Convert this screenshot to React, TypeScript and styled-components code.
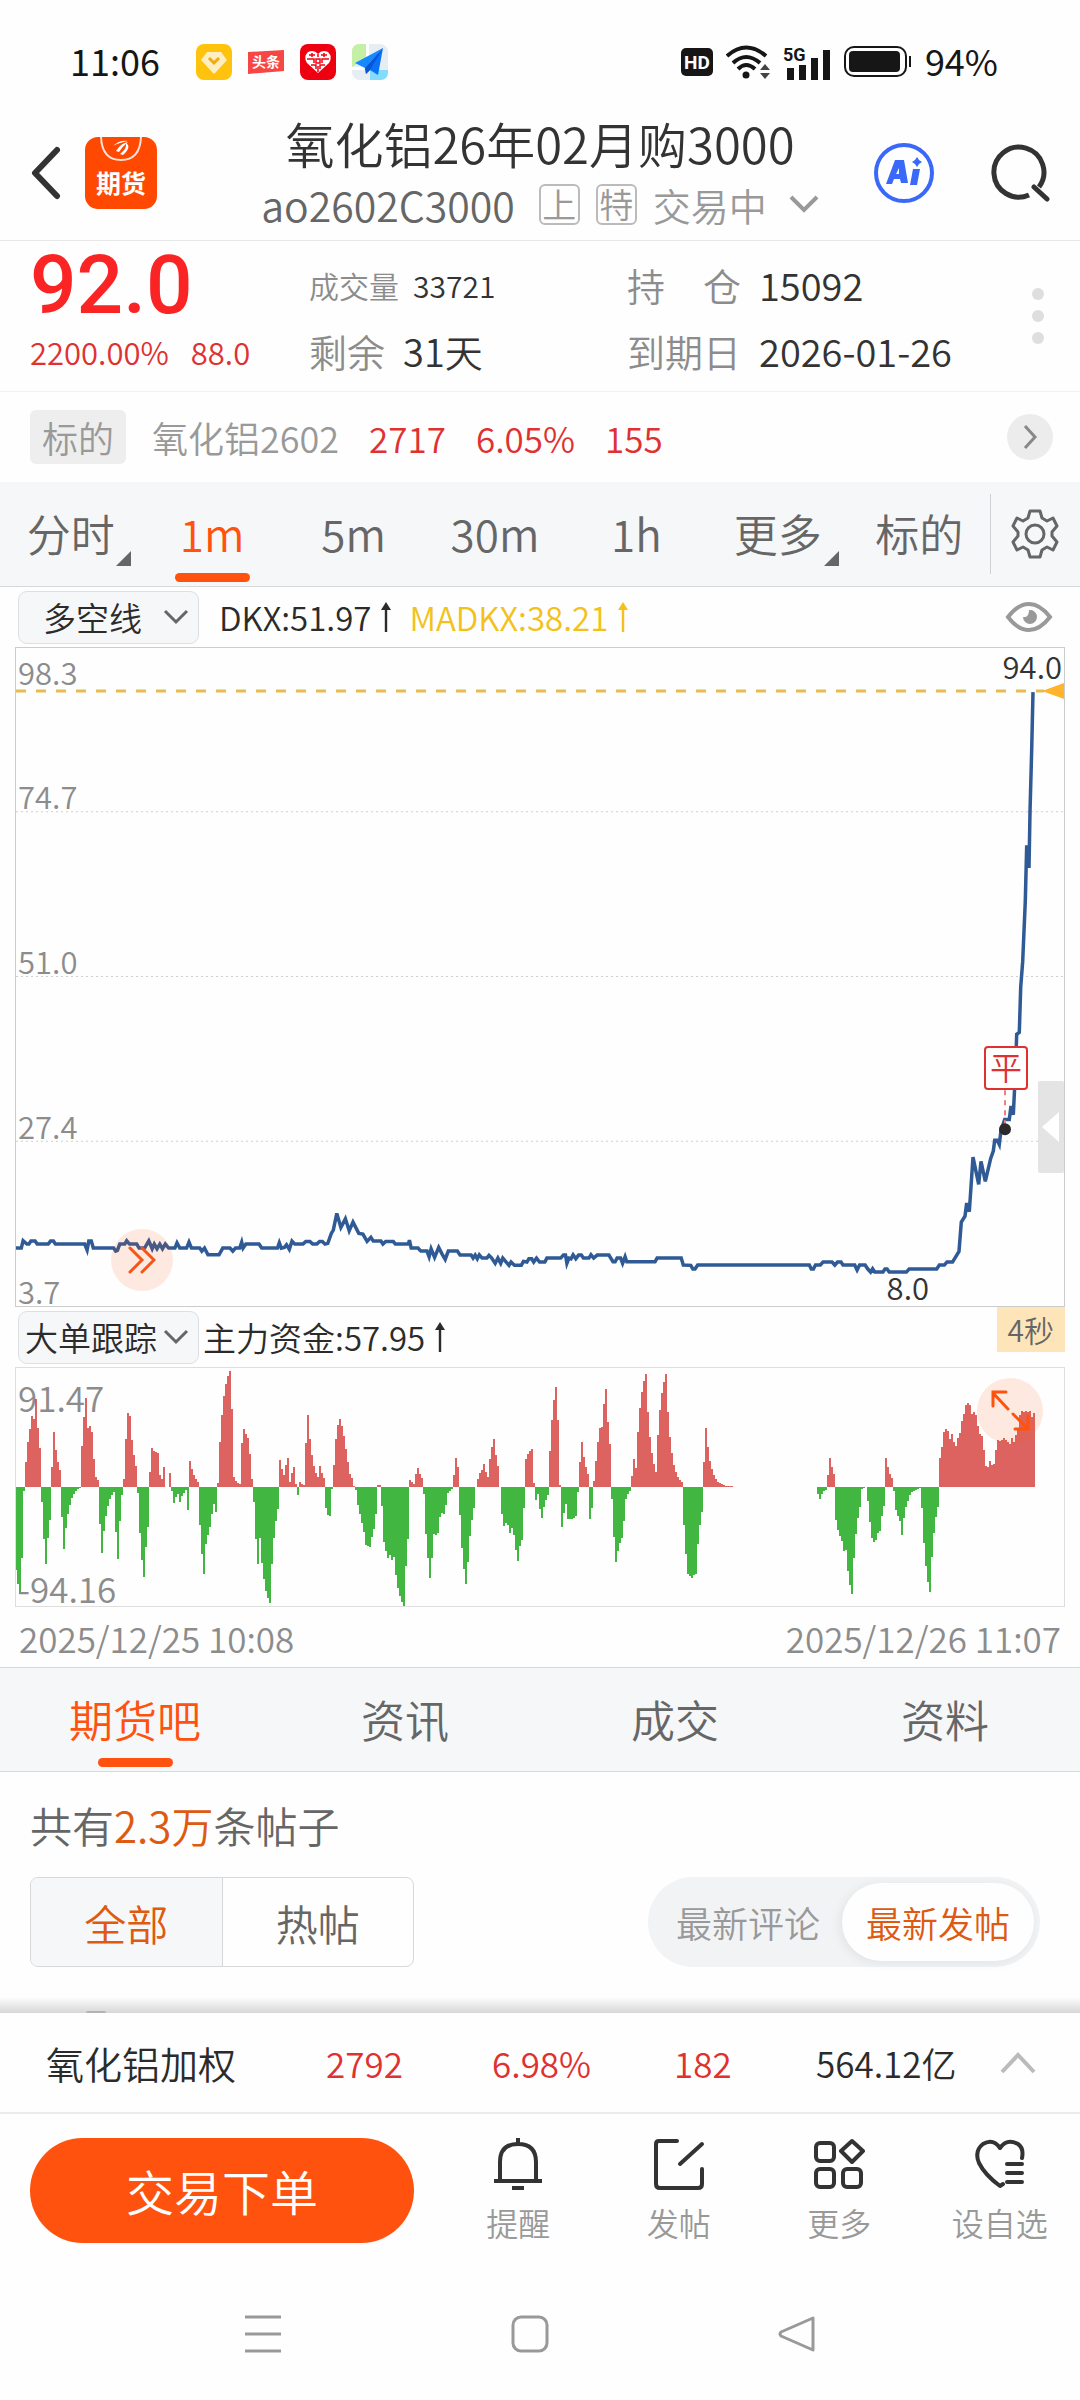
import React, { useState } from "react";
import styled, { createGlobalStyle } from "styled-components";

const color = {
  ink: "#2b2b2b",
  text: "#333333",
  mid: "#666666",
  soft: "#8c8c8c",
  faint: "#999999",
  red: "#e03131",
  brand: "#ff520e",
  accent: "#dd5a10",
  panel: "#f6f7f9",
  rule: "#d6d8db",
  frame: "#cccccc",
  line: "#2f5a96",
  gold: "#f2c21b",
};

const GlobalStyle = createGlobalStyle`
  *, *::before, *::after { box-sizing: border-box; }
  body {
    margin: 0;
    background: #fefefe;
    color: ${color.text};
    font-family: "Noto Sans CJK SC", "Noto Sans", sans-serif;
    font-weight: 350;
  }
  button, select {
    margin: 0;
    padding: 0;
    border: 0;
    background: none;
    color: inherit;
    font: inherit;
    cursor: pointer;
  }
  svg { display: block; flex: none; }
`;

/* ---------- chart data ---------- */

type Trace = { x: number; y: number; sx: number; sy: number; pts: number[] };

const priceTraces: Trace[] = [
  {
    x: -16, y: 533, sx: 2.904, sy: 3,
    pts: [
      45,204,62,204,67,182,78,192,84,192,90,183,102,183,108,192,140,192,147,183,155,183,161,192,246,192,253,210,
      258,183,265,183,271,204,330,204,336,213,341,211,348,192,362,192,368,182,376,192,397,192,404,204,420,204,
      432,182,442,206,448,192,456,206,464,192,472,206,480,192,490,204,508,204,514,188,522,204,542,204,549,186,
      556,204,580,204,586,213,594,204,604,224,636,224,647,204,668,204,676,213,684,204,696,204,702,186,706,204,
      714,192,752,192,760,204,806,204,811,188,817,204,826,202,832,194,840,208,848,183,856,192,880,192,888,184,
      900,184,908,192,920,192,928,184,936,184,944,192,952,190,962,160,968,150,978,100,990,142,1003,116,1014,152,
      1025,126,1042,160,1054,162,1066,184,1077,172,1084,183,1106,183,1112,192,1120,184,1142,184,1148,192,
      1186,192,1189,180,1194,204,1214,204,1222,213,1240,213,1246,230,1252,206,1262,232,1274,202,1284,222,
      1293,238,1302,213,1328,213,1336,225,1368,225,1374,234,1380,225,1386,236,1392,224,1400,234,1414,234,
      1420,226,1428,234,1438,250,1446,234,1454,250,1460,234,1470,246,1478,256,1484,246,1494,256,1514,256,
      1520,244,1530,246,1536,236,1544,236,1550,246,1558,234,1567,246,
    ],
  },
  {
    x: 524, y: 533, sx: 2.904, sy: 3,
    pts: [
      0,246,14,246,20,234,60,234,68,225,74,225,78,250,84,234,90,236,96,224,104,236,112,225,120,225,126,234,
      142,234,148,224,156,234,166,225,200,225,212,245,218,245,224,234,234,234,240,250,247,230,252,245,334,245,
      340,234,410,234,416,255,438,256,444,267,450,267,458,255,782,255,788,267,794,267,800,255,814,255,822,246,
      848,246,856,255,864,246,874,246,880,255,914,255,921,270,928,255,944,255,952,267,960,276,966,266,972,276,
      996,276,1002,267,1008,267,1014,276,1064,276,1072,267,1152,267,1160,255,1174,255,1182,246,1198,246,
    ],
  },
  {
    x: 784, y: -7, sx: 3, sy: 2.306,
    pts: [
      477,1410,484,1342,495,1328,500,1298,508,1318,514,1250,519,1192,536,1255,543,1202,556,1248,572,1195,
      580,1178,584,1153,592,1153,598,1163,603,1130,614,1105,628,1105,633,1074,640,1094,646,1000,650,908,
      658,904,662,800,668,740,676,600,680,472,687,524,690,395,695,250,699,118,
    ],
  },
];

const pricePoints = priceTraces
  .flatMap((t) => {
    const out: string[] = [];
    for (let i = 0; i < t.pts.length; i += 2) {
      out.push(`${(t.x + t.pts[i] / t.sx).toFixed(1)},${(t.y + t.pts[i + 1] / t.sy).toFixed(1)}`);
    }
    return out;
  })
  .join(" ");

/* Fund-flow runs: first the start of the run, then one reading per minute; 411 is the zero level. */
const flowZero = 411;
const flowScale = 2.904;
const flowRuns: [number, number[][]][] = [
  [-16, [
    [45,663,705,735,627,426],
    [73,336,276,237,198,207,147,234,294],
    [119,459,570,645,567,513],
    [148,351,246,300,336,360],
    [177,504,600,537,495,468,447,435,425,419,415],
    [235,288,201,144,234,228,246,327,381,390],
    [287,525,612,546,501,471,450,438,429,549,630,516,438],
    [357,387,267,189,198,270,315,348],
    [398,432,552,633,684,594,534],
    [433,366,294,303,306,309,375,387,351,413,413,369,426,462,444,435,459,441,432,423,483],
    [549,333,357,375,387,396],
    [578,528,615,675,585,558,534,495,465,489],
    [630,399,276,195,138,102,78,63,177,381,393,399,402],
    [700,279,237,252,264,312,387],
    [735,459,570,645,567,642,690,726,747,762,645,567,516,480],
    [810,330,357,375,345,324,396,369,351,402,438,396,402,405],
    [886,279,195,267,315,348,369,381,348,369,384],
    [944,477,498,501,420],
    [967,345,267,225,207,228,258,297,336,372,384,408],
    [1031,423,468,495,522,549,588,591,594,564,540,495],
    [1095,405,405],
    [1107,471,579,606,627,618,633,624,678,717,741,759,771,651,570],
    [1188,390,396,402,372,354,372,384],
    [1228,435,555,627,687,627,555,558,552,504,492,495,468,432,426,420],
    [1315,375,324,351],
    [1333,498,597,660,705,639,561,513,477,414],
    [1385,387,369,360,342,366,381,327,291,267,315,348],
    [1455,495,531,522,528,552,537,558,603,636,591,573,477],
    [1524,327,312,303,297,399,453,435,480],
  ]],
  [524, [
    [3,507,474,453,438],
    [26,303,210,150,111,210,405],
    [61,534,492,465,510,510,510,507,501,429],
    [113,336,276,321,351,372],
    [142,510,477],
    [154,393,333,276,234,231,162,117,216,282],
    [206,450,564,639,606,582,567,516,450,435,426],
    [264,378,327,354,246,174,126,93,72,186,261,309,342,366,255,180,129,96,72,186,261,309,345,366,381,390,396],
    [415,528,615,675,681,687,678,675,585,528,489],
    [473,336,234,291,333,357,375,387,396,399,402,405,408,408,408,408],
    [804,435,450,435,426,423],
    [833,375,324,351,372],
    [857,513,543,561,576,606,603,666,708,735,627,555,507,474,420,417,414],
    [950,456,519,567,579,573,552,546,501,471],
    [1002,324,351,372,384],
    [1025,426,483,501,516,558,507,474,456,438,429,425,421,418,415],
    [1106,477,582,651,699,729,624,552,504,474],
    [1159,324,291,246,237,243,267,252,276,288,264,249,213,192,165,159,165,192,186,195,228,252,258,300,348,351,333,345,342,300,270,273,270,264,270,276,282,264,276,255,237,195,183,186,183,186,183,201,189],
  ]],
];

const flowBars = flowRuns.flatMap(([base, runs]) =>
  runs.flatMap(([start, ...values]) =>
    values.map((v, i) => ({
      x: Math.round(base + start / flowScale) + i * 2,
      h: (flowZero - v) / 3,
    }))
  )
);

/* ---------- layout ---------- */

const Page = styled.main`
  display: flex;
  flex-direction: column;
  min-height: 100vh;
  background: #fefefe;
`;

const StatusBar = styled.div`
  display: flex;
  justify-content: space-between;
  height: 110px;
  padding: 14px 82px 0 70px;
  color: #161616;
  font-size: 36px;
  line-height: 40px;
  font-weight: 400;
`;

const StatusGroup = styled.div<{ $gap: number }>`
  display: flex;
  align-items: center;
  gap: ${(p) => p.$gap}px;
`;

const StatusText = styled.span<{ $after?: number }>`
  margin-right: ${(p) => p.$after || 0}px;
  padding-bottom: 4px;
`;

const Header = styled.header`
  display: grid;
  grid-template-columns: 200px 1fr 200px;
  align-items: center;
  padding: 2px 0 6px;
  border-bottom: 1px solid #e8e8e8;
`;

const HeaderSide = styled.div<{ $end?: boolean }>`
  display: flex;
  align-items: center;
  justify-content: ${(p) => (p.$end ? "flex-end" : "flex-start")};
  gap: ${(p) => (p.$end ? 56 : 24)}px;
  padding: ${(p) => (p.$end ? "0 30px 0 0" : "0 0 0 29px")};
`;

const HeaderTitle = styled.div`
  text-align: center;
  white-space: nowrap;
`;

const Title = styled.h1`
  margin: 0;
  font-size: 49px;
  font-weight: 350;
  line-height: 62px;
`;

const Subtitle = styled.div`
  display: flex;
  align-items: center;
  justify-content: center;
  gap: 16px;
  height: 60px;
  color: ${color.faint};
  font-size: 38px;
`;

const Code = styled.span`
  margin-right: 8px;
  color: ${color.mid};
  font-size: 41px;
`;

const Tag = styled.span`
  display: grid;
  place-items: center;
  width: 41px;
  height: 41px;
  border: 2px solid #bbbbbb;
  border-radius: 6px;
  font-size: 34px;
  line-height: 34px;
`;

const StateButton = styled.button`
  display: flex;
  align-items: center;
  gap: 22px;
`;

const IconButton = styled.button`
  display: grid;
  place-items: center;
`;

const Quote = styled.section`
  display: grid;
  grid-template-columns: 279px 318px 1fr 84px;
  grid-template-rows: 88px 44px;
  align-items: center;
  padding: 0 0 18px 30px;
  border-bottom: 1px solid #f1f1f1;
  white-space: nowrap;
`;

const LastPrice = styled.strong`
  color: #fa2424;
  font-family: Roboto, sans-serif;
  font-size: 82px;
  font-weight: 500;
  line-height: 88px;
`;

const Change = styled.div`
  display: flex;
  gap: 22px;
  color: ${color.red};
  font-size: 31px;
`;

const Stat = styled.div<{ $small?: boolean }>`
  display: flex;
  align-items: center;
  gap: ${(p) => (p.$small ? 14 : 18)}px;
  color: ${color.soft};
  font-size: ${(p) => (p.$small ? 30 : 38)}px;
  line-height: 44px;
`;

const StatLabel = styled.span<{ $spread?: boolean }>`
  display: ${(p) => (p.$spread ? "flex" : "block")};
  justify-content: space-between;
  min-width: ${(p) => (p.$spread ? "114px" : "0")};
`;

const StatValue = styled.span`
  color: ${color.text};
`;

const MoreDots = styled.button`
  display: grid;
  gap: 10px;
  justify-content: center;
  grid-column: 4;
  grid-row: 1 / 3;
  padding-top: 18px;
  i {
    width: 12px;
    height: 12px;
    border-radius: 50%;
    background: #dedede;
  }
`;

const Underlying = styled.section`
  display: flex;
  align-items: center;
  height: 90px;
  padding: 0 27px 0 30px;
  color: ${color.faint};
  font-size: 36px;
  white-space: nowrap;
`;

const UnderlyingBadge = styled.span`
  margin-right: 26px;
  padding: 0 12px;
  border-radius: 6px;
  background: #eeeeee;
  line-height: 54px;
`;

const Rise = styled.span`
  margin-left: 30px;
  color: ${color.red};
  font-size: 35px;
`;

const GoButton = styled.button`
  display: grid;
  place-items: center;
  width: 46px;
  height: 46px;
  margin-left: auto;
  border-radius: 50%;
  background: #ececec;
`;

const TabBar = styled.nav<{ $top?: boolean }>`
  display: flex;
  height: 105px;
  border-top: ${(p) => (p.$top ? `1px solid ${color.rule}` : "0")};
  border-bottom: 1px solid ${color.rule};
  background: ${color.panel};
`;

const Tab = styled.button<{ $on: boolean }>`
  position: relative;
  flex: 1 1 0;
  padding-bottom: 2px;
  color: ${(p) => (p.$on ? color.brand : color.mid)};
  font-size: 44px;
  line-height: 64px;
  &::after {
    content: "";
    display: ${(p) => (p.$on ? "block" : "none")};
    position: absolute;
    left: 50%;
    bottom: 4px;
    width: 75px;
    height: 9px;
    margin-left: -37px;
    border-radius: 5px;
    background: ${color.brand};
  }
`;

const Corner = styled.svg`
  position: absolute;
  right: 10px;
  bottom: 20px;
`;

const SettingsButton = styled(IconButton)`
  width: 90px;
  margin: 12px 0;
  border-left: 1px solid #cfd1d4;
`;

const IndicatorRow = styled.div`
  display: flex;
  align-items: center;
  height: 60px;
  padding: 0 27px 0 18px;
  color: ${color.ink};
  font-size: 33px;
  white-space: nowrap;
`;

const SelectBox = styled.label<{ $gap: number }>`
  display: grid;
  align-items: center;
  width: 181px;
  height: 53px;
  margin-right: ${(p) => p.$gap}px;
  border: 1px solid #dddfe3;
  border-radius: 9px;
  background: ${color.panel};
  > * { grid-area: 1 / 1; }
  > svg { justify-self: end; margin-right: 9px; pointer-events: none; }
`;

const Select = styled.select<{ $inset: number }>`
  appearance: none;
  width: 100%;
  height: 51px;
  padding-left: ${(p) => p.$inset}px;
`;

const Reading = styled.span<{ $tone?: string }>`
  display: flex;
  align-items: center;
  gap: 8px;
  margin-right: 16px;
  color: ${(p) => p.$tone || color.ink};
`;

const EyeButton = styled(IconButton)`
  margin-left: auto;
`;

const PlotFrame = styled.div<{ $height: number; $tone: string }>`
  position: relative;
  height: ${(p) => p.$height}px;
  margin: 0 15px;
  border: 1px solid ${(p) => p.$tone};
`;

const Plot = styled.svg`
  width: 100%;
  height: 100%;
`;

const AxisLabel = styled.span<{ $top: number; $size?: number }>`
  position: absolute;
  left: 2px;
  top: ${(p) => p.$top}px;
  color: ${color.soft};
  font-size: ${(p) => p.$size || 31}px;
  line-height: 40px;
`;

const HighLabel = styled.span`
  position: absolute;
  right: 2px;
  top: -2px;
  font-size: 31px;
  line-height: 40px;
`;

const LowLabel = styled.span`
  position: absolute;
  right: 135px;
  bottom: -1px;
  font-size: 31px;
  line-height: 40px;
`;

const TradeMark = styled.span`
  position: absolute;
  right: 36px;
  top: 398px;
  display: grid;
  place-items: center;
  width: 44px;
  height: 44px;
  padding-bottom: 4px;
  border: 2px solid ${color.red};
  border-radius: 4px;
  background: #fefefe;
  color: ${color.red};
  font-size: 32px;
  line-height: 32px;
`;

const DrawerHandle = styled.button`
  position: absolute;
  right: 0;
  top: 433px;
  display: grid;
  place-items: center end;
  width: 26px;
  height: 92px;
  border-radius: 2px;
  background: #e4e4e4;
`;

const FloatButton = styled.button<{ $size: number; $place: string }>`
  position: absolute;
  inset: ${(p) => p.$place};
  display: grid;
  place-items: center;
  width: ${(p) => p.$size}px;
  height: ${(p) => p.$size}px;
  border-radius: 50%;
  background: rgba(255, 82, 14, 0.12);
`;

const Countdown = styled.span`
  align-self: flex-start;
  margin: 0 -12px 0 auto;
  padding: 0 11px;
  background: #fde5b9;
  color: ${color.mid};
  font-size: 30px;
  line-height: 45px;
`;

const DateRow = styled.div`
  display: flex;
  align-items: center;
  justify-content: space-between;
  height: 60px;
  padding: 0 19px;
  color: ${color.soft};
  font-size: 35px;
`;

const Posts = styled.section`
  padding: 29px 40px 0 30px;
`;

const PostCount = styled.p`
  margin: 0 0 28px;
  color: ${color.mid};
  font-size: 42px;
  line-height: 48px;
`;

const Accent = styled.span`
  color: ${color.accent};
`;

const FilterRow = styled.div`
  display: flex;
  justify-content: space-between;
`;

const Segment = styled.div`
  display: flex;
  width: 384px;
  height: 90px;
  overflow: hidden;
  border: 1px solid #d8d8d8;
  border-radius: 8px;
`;

const SegmentButton = styled.button<{ $on: boolean }>`
  flex: 1;
  background: ${(p) => (p.$on ? color.panel : "transparent")};
  color: ${(p) => (p.$on ? color.accent : color.mid)};
  font-size: 42px;
  & + & { border-left: 1px solid #d8d8d8; }
`;

const Pill = styled.div`
  display: flex;
  height: 90px;
  padding: 6px;
  border-radius: 45px;
  background: #f2f3f5;
`;

const PillButton = styled.button<{ $on: boolean }>`
  padding: 0 ${(p) => (p.$on ? 24 : 22)}px;
  border-radius: 39px;
  background: ${(p) => (p.$on ? "#fefefe" : "transparent")};
  box-shadow: ${(p) => (p.$on ? "-2px 2px 12px rgba(0, 0, 0, 0.07)" : "none")};
  color: ${(p) => (p.$on ? color.accent : color.faint)};
  font-size: 36px;
`;

const FeedEdge = styled.div`
  display: flex;
  align-items: flex-end;
  height: 46px;
  overflow: hidden;
  background: linear-gradient(to top, #d6d6d6, rgba(254, 254, 254, 0) 16px);
`;

const AvatarTip = styled.span`
  width: 20px;
  height: 2px;
  margin-left: 86px;
  border-radius: 10px 10px 0 0;
  background: #b4b4b4;
`;

const IndexRow = styled.section`
  display: grid;
  grid-template-columns: 280px 166px 182px 142px 1fr auto;
  align-items: center;
  height: 101px;
  padding: 0 44px 0 46px;
  border-bottom: 2px solid #ececec;
  color: ${color.red};
  font-size: 35px;
  white-space: nowrap;
`;

const IndexName = styled.span`
  color: ${color.ink};
  font-size: 38px;
`;

const IndexVolume = styled.span`
  color: ${color.ink};
`;

const ActionBar = styled.footer`
  display: flex;
  gap: 24px;
  padding: 24px 0 0 30px;
`;

const TradeButton = styled.button`
  width: 384px;
  height: 105px;
  padding-bottom: 2px;
  border-radius: 53px;
  background: ${color.brand};
  color: #ffffff;
  font-size: 48px;
`;

const Actions = styled.div`
  display: flex;
  flex: 1;
`;

const Action = styled.button`
  display: flex;
  flex: 1 1 0;
  flex-direction: column;
  align-items: center;
  gap: 10px;
  color: ${color.faint};
  font-size: 32px;
  line-height: 44px;
  white-space: nowrap;
`;

const SystemNav = styled.nav`
  display: grid;
  grid-template-columns: repeat(3, 1fr);
  flex: 1;
  align-content: center;
  padding: 24px 150px 0 130px;
`;

/* ---------- icons ---------- */

const Chevron = ({ w, h, stroke, width = 3, up = false }: { w: number; h: number; stroke: string; width?: number; up?: boolean }) => (
  <svg width={w} height={h} fill="none" stroke={stroke} strokeWidth={width} aria-hidden="true">
    <path d={up ? `M2 ${h - 2}L${w / 2} 3L${w - 2} ${h - 2}` : `M2 2L${w / 2} ${h - 3}L${w - 2} 2`} />
  </svg>
);

const ArrowUp = () => (
  <svg width="14" height="30" viewBox="0 0 14 30" aria-hidden="true">
    <path d="M7 6V30" stroke="currentColor" strokeWidth="2.4" />
    <path d="M7 0L12 8H2Z" fill="currentColor" />
  </svg>
);

const GemIcon = () => (
  <svg width="36" height="36" viewBox="0 0 36 36" aria-hidden="true">
    <rect width="36" height="36" rx="8" fill="#ffc30d" />
    <path d="M11 8H25L31 16L19 29Q18 30 17 29L5 16Z" fill="#ffeec2" />
    <path d="M13 14L18 19L23 14" fill="none" stroke="#f2a90c" strokeWidth="3" />
  </svg>
);

const NewsIcon = () => (
  <svg width="36" height="36" viewBox="0 0 36 36" aria-hidden="true">
    <path d="M0 8L36 6V27L0 30Z" fill="#f64744" />
    <text x="18" y="23" textAnchor="middle" fontSize="14" fontWeight="700" fill="#fff">头条</text>
  </svg>
);

const HeartIcon = () => (
  <svg width="36" height="36" viewBox="0 0 36 36" aria-hidden="true">
    <rect width="36" height="36" rx="8" fill="#ee0010" />
    <path d="M18 29L7 19Q3 13 8 8Q14 5 18 10Q22 5 28 8Q33 13 29 19Z" fill="#fff" />
    <path d="M9 11h6M21 11h6M7 15h7v4M29 15h-7v4M11 21h5v4M25 21h-5v4M18 10v3M12 9v4M24 9v4M18 22v6M16 15h4v4h-4z" fill="none" stroke="#ee0010" strokeWidth="1.5" />
  </svg>
);

const MapIcon = () => (
  <svg width="36" height="36" viewBox="0 0 36 36" aria-hidden="true">
    <rect width="36" height="36" rx="8" fill="#e6edf3" />
    <path d="M8 0H14V14L0 23V8Q0 0 8 0Z" fill="#c3f0a5" />
    <path d="M18 26H36V28Q36 36 28 36H18Z" fill="#84dcfc" />
    <path d="M14 0h3v14h-3zM0 23h12v3H0z" fill="#fff" />
    <path d="M31 4L3 19L13 24Z" fill="#1789ff" />
    <path d="M31 4L13 24L14 30L18 26L26 31Z" fill="#0a72f5" />
    <path d="M31 4L13 24L14 30L18 26Z" fill="#0756d8" />
  </svg>
);

const HdIcon = () => (
  <svg width="32" height="28" viewBox="0 0 32 28" aria-hidden="true">
    <rect width="32" height="28" rx="5" fill="#161616" />
    <text x="16" y="21" textAnchor="middle" fontFamily="Roboto" fontSize="19" fontWeight="700" fill="#fff">HD</text>
  </svg>
);

const WifiIcon = () => (
  <svg width="44" height="34" viewBox="0 0 44 34" aria-hidden="true">
    <g fill="none" stroke="#161616" strokeWidth="4">
      <path d="M1 11Q20 -6 40 11" />
      <path d="M7 18Q20 6 34 18" />
      <path d="M12 24Q20 16 29 24" />
    </g>
    <circle cx="20" cy="30" r="3.5" fill="#161616" />
    <path d="M39 19L44 25H34ZM39 34L44 28H34Z" fill="#444" />
  </svg>
);

const SignalIcon = () => (
  <svg width="48" height="38" viewBox="0 -4 48 38" aria-hidden="true">
    <text x="0" y="14" fontFamily="Roboto" fontSize="18" fontWeight="700" fill="#161616">5G</text>
    <path d="M4 21h7v12H4zM16 18h7v15h-7zM28 11h7v22h-7zM40 3h7v30h-7z" fill="#161616" />
  </svg>
);

const BatteryIcon = () => (
  <svg width="68" height="32" viewBox="0 0 68 32" aria-hidden="true">
    <rect x="1" y="1" width="61" height="29" rx="9" fill="none" stroke="#161616" strokeWidth="2" />
    <rect x="5" y="5" width="51" height="21" rx="4" fill="#161616" />
    <path d="M66 10V21" stroke="#161616" strokeWidth="2" />
  </svg>
);

const BackIcon = () => (
  <svg width="32" height="54" viewBox="0 0 32 54" fill="none" stroke="#333" strokeWidth="6" strokeLinecap="round" aria-hidden="true">
    <path d="M28 4L6 27L28 50" strokeLinejoin="round" />
  </svg>
);

const AppLogo = () => (
  <svg width="72" height="72" viewBox="0 0 72 72" aria-hidden="true">
    <rect width="72" height="72" rx="13" fill="#ff4800" />
    <path d="M16 0Q17 23 36 23Q55 23 56 0" fill="none" stroke="#ffe1d6" strokeWidth="2" />
    <path d="M28 9Q34 3 43 4Q33 6 28 9ZM31 14Q36 6 43 5Q37 10 34 15ZM35 17Q42 12 41 6Q47 10 38 18Z" fill="#fff" />
    <text x="36" y="56" textAnchor="middle" fontSize="25" fontWeight="700" fill="#fff">期货</text>
  </svg>
);

const AiIcon = () => (
  <svg width="60" height="60" viewBox="0 0 60 60" aria-hidden="true">
    <circle cx="30" cy="30" r="28" fill="none" stroke="#3a68f8" strokeWidth="4" />
    <path d="M12 41L21 17H30L34 40H27L26 36H20L18 41ZM22 31H25V25ZM39 26H46L43 42H36ZM43 14L45 17L48 19L45 21L43 24L41 21L38 19L41 17Z" fill="#3a68f8" />
  </svg>
);

const SearchIcon = () => (
  <svg width="60" height="60" viewBox="0 0 60 60" fill="none" stroke="#333" strokeWidth="5" strokeLinecap="round" aria-hidden="true">
    <path d="M39 52A25 25 0 1 1 49 44" strokeLinecap="butt" />
    <path d="M44 44L57 56" />
  </svg>
);

const GearIcon = () => (
  <svg width="48" height="52" viewBox="0 0 48 52" fill="none" stroke="#666" strokeWidth="3" strokeLinejoin="round" aria-hidden="true">
    <path d="M19 3H29L31 10L36 13L42 10L46 18L41 24V28L46 34L42 42L36 39L31 42L29 49H19L17 42L12 39L6 42L2 34L7 28V24L2 18L6 10L12 13L17 10Z" />
    <circle cx="24" cy="26" r="9" />
  </svg>
);

const EyeIcon = () => (
  <svg width="48" height="32" viewBox="0 0 48 32" aria-hidden="true">
    <path d="M3 16Q13 3 24 3Q35 3 45 16Q35 29 24 29Q13 29 3 16Z" fill="none" stroke="#999" strokeWidth="4" />
    <path d="M24 9A7 7 0 1 1 18 16Q24 17 24 9Z" fill="#999" />
  </svg>
);

const BellIcon = () => (
  <svg width="52" height="52" viewBox="0 0 52 52" fill="none" stroke="#333" strokeWidth="4" aria-hidden="true">
    <path d="M26 0V6M8 43V24Q8 6 26 6Q44 6 44 24V43M2 43H50M20 50H32" />
  </svg>
);

const PostIcon = () => (
  <svg width="52" height="52" viewBox="0 0 52 52" fill="none" stroke="#333" strokeWidth="4" strokeLinecap="round" aria-hidden="true">
    <path d="M24 3H6Q3 3 3 6V46Q3 50 7 50H45Q49 50 49 46V31M49 6L27 26" />
  </svg>
);

const GridIcon = () => (
  <svg width="52" height="52" viewBox="0 0 52 52" fill="none" stroke="#333" strokeWidth="4" strokeLinejoin="round" aria-hidden="true">
    <rect x="3" y="5" width="18" height="18" rx="4" />
    <rect x="3" y="31" width="18" height="18" rx="4" />
    <rect x="30" y="31" width="18" height="18" rx="4" />
    <path d="M39 3L50 13L39 24L28 13Z" />
  </svg>
);

const FavoriteIcon = () => (
  <svg width="52" height="52" viewBox="0 0 52 52" fill="none" stroke="#333" strokeWidth="4" strokeLinecap="round" strokeLinejoin="round" aria-hidden="true">
    <path d="M48 20Q50 10 44 6Q33 0 26 10Q19 0 9 6Q0 13 5 25Q11 37 26 48L29 46M33 26H48M33 35H48M33 44H48" />
  </svg>
);

/* ---------- screen ---------- */

const periods = ["分时", "1m", "5m", "30m", "1h", "更多", "标的"];
const sections = ["期货吧", "资讯", "成交", "资料"];

export default function App() {
  const [period, setPeriod] = useState("1m");
  const [section, setSection] = useState("期货吧");
  const [filter, setFilter] = useState("全部");
  const [order, setOrder] = useState("最新发帖");

  return (
    <Page>
      <GlobalStyle />
      <StatusBar>
        <StatusGroup $gap={16}>
          <StatusText $after={20}>11:06</StatusText>
          <GemIcon />
          <NewsIcon />
          <HeartIcon />
          <MapIcon />
        </StatusGroup>
        <StatusGroup $gap={13}>
          <HdIcon />
          <WifiIcon />
          <SignalIcon />
          <BatteryIcon />
          <StatusText>94%</StatusText>
        </StatusGroup>
      </StatusBar>

      <Header>
        <HeaderSide>
          <IconButton aria-label="返回"><BackIcon /></IconButton>
          <AppLogo />
        </HeaderSide>
        <HeaderTitle>
          <Title>氧化铝26年02月购3000</Title>
          <Subtitle>
            <Code>ao2602C3000</Code>
            <Tag>上</Tag>
            <Tag>特</Tag>
            <StateButton>
              交易中
              <Chevron w={30} h={18} stroke="#999" width={4} />
            </StateButton>
          </Subtitle>
        </HeaderTitle>
        <HeaderSide $end>
          <IconButton aria-label="AI"><AiIcon /></IconButton>
          <IconButton aria-label="搜索"><SearchIcon /></IconButton>
        </HeaderSide>
      </Header>

      <Quote>
        <LastPrice>92.0</LastPrice>
        <Stat $small><StatLabel>成交量</StatLabel><StatValue>33721</StatValue></Stat>
        <Stat><StatLabel $spread><span>持</span><span>仓</span></StatLabel><StatValue>15092</StatValue></Stat>
        <MoreDots aria-label="更多行情"><i /><i /><i /></MoreDots>
        <Change><span>2200.00%</span><span>88.0</span></Change>
        <Stat><StatLabel>剩余</StatLabel><StatValue>31天</StatValue></Stat>
        <Stat><StatLabel>到期日</StatLabel><StatValue>2026-01-26</StatValue></Stat>
      </Quote>

      <Underlying>
        <UnderlyingBadge>标的</UnderlyingBadge>
        <span>氧化铝2602</span>
        <Rise>2717</Rise>
        <Rise>6.05%</Rise>
        <Rise>155</Rise>
        <GoButton aria-label="查看标的">
          <svg width="16" height="26" fill="none" stroke="#888" strokeWidth="3" aria-hidden="true"><path d="M3 2L13 13L3 24" /></svg>
        </GoButton>
      </Underlying>

      <TabBar>
        {periods.map((p) => (
          <Tab key={p} $on={p === period} onClick={() => setPeriod(p)}>
            {p}
            {(p === "分时" || p === "更多") && (
              <Corner width="15" height="15" aria-hidden="true"><path d="M15 0V15H0Z" fill="#666" /></Corner>
            )}
          </Tab>
        ))}
        <SettingsButton aria-label="设置"><GearIcon /></SettingsButton>
      </TabBar>

      <IndicatorRow>
        <SelectBox $gap={20}>
          <Select $inset={24} aria-label="主图指标"><option>多空线</option></Select>
          <Chevron w={26} h={16} stroke="#666" />
        </SelectBox>
        <Reading>DKX:51.97<ArrowUp /></Reading>
        <Reading $tone={color.gold}>MADKX:38.21<ArrowUp /></Reading>
        <EyeButton aria-label="显示"><EyeIcon /></EyeButton>
      </IndicatorRow>

      <PlotFrame $height={660} $tone={color.frame}>
        <Plot viewBox="0 0 1048 659" preserveAspectRatio="none" role="img" aria-label="价格走势">
          <g stroke="#cfcfcf" strokeDasharray="2 3">
            <path d="M0 164H1048M0 329H1048M0 494H1048" />
          </g>
          <path d="M0 43H1028" stroke="#e9bb4d" strokeWidth="3" strokeDasharray="10 10" />
          <path d="M1026 43L1048 35V51Z" fill="#ffb42b" />
          <polyline points={pricePoints} fill="none" stroke={color.line} strokeWidth="3.5" />
          <path d="M989 443V478" stroke="#ef7f7f" strokeWidth="2" strokeDasharray="5 5" />
          <circle cx="989" cy="482" r="6" fill="#2b2b2b" />
        </Plot>
        <AxisLabel $top={4}>98.3</AxisLabel>
        <AxisLabel $top={128}>74.7</AxisLabel>
        <AxisLabel $top={293}>51.0</AxisLabel>
        <AxisLabel $top={458}>27.4</AxisLabel>
        <AxisLabel $top={623}>3.7</AxisLabel>
        <HighLabel>94.0</HighLabel>
        <LowLabel>8.0</LowLabel>
        <TradeMark>平</TradeMark>
        <DrawerHandle aria-label="展开侧栏">
          <svg width="24" height="32" aria-hidden="true"><path d="M2 16L19 1V31Z" fill="#fff" /></svg>
        </DrawerHandle>
        <FloatButton $size={62} $place="581px auto auto 95px" aria-label="快进">
          <svg width="28" height="30" fill="none" stroke="#f4561a" strokeWidth="3" strokeLinecap="round" aria-hidden="true">
            <path d="M2 3L14 15L2 27M14 3L26 15L14 27" />
          </svg>
        </FloatButton>
      </PlotFrame>

      <IndicatorRow>
        <SelectBox $gap={4}>
          <Select $inset={6} aria-label="副图指标"><option>大单跟踪</option></Select>
          <Chevron w={26} h={16} stroke="#666" />
        </SelectBox>
        <Reading>主力资金:57.95<ArrowUp /></Reading>
        <Countdown>4秒</Countdown>
      </IndicatorRow>

      <PlotFrame $height={240} $tone="#dedede">
        <Plot viewBox="0 0 1048 239" preserveAspectRatio="none" role="img" aria-label="主力资金">
          {flowBars.map((b, i) => (
            <rect
              key={i}
              x={b.x}
              y={b.h > 0 ? 119 - b.h : 119}
              width={2}
              height={Math.abs(b.h)}
              fill={b.h > 0 ? "#dc6360" : "#41b640"}
              shapeRendering="crispEdges"
            />
          ))}
        </Plot>
        <AxisLabel $top={9} $size={35}>91.47</AxisLabel>
        <AxisLabel $top={200} $size={35}>-94.16</AxisLabel>
        <FloatButton $size={66} $place="10px 21px auto auto" aria-label="全屏">
          <svg width="40" height="42" fill="none" stroke="#ff520e" strokeWidth="3" strokeLinecap="round" aria-hidden="true">
            <path d="M18 19L3 3M3 16V2H16M23 24L37 38M38 26V39H25" />
          </svg>
        </FloatButton>
      </PlotFrame>

      <DateRow><span>2025/12/25 10:08</span><span>2025/12/26 11:07</span></DateRow>

      <TabBar $top>
        {sections.map((s) => (
          <Tab key={s} $on={s === section} onClick={() => setSection(s)}>{s}</Tab>
        ))}
      </TabBar>

      <Posts>
        <PostCount>共有<Accent>2.3万</Accent>条帖子</PostCount>
        <FilterRow>
          <Segment>
            {["全部", "热帖"].map((f) => (
              <SegmentButton key={f} $on={f === filter} onClick={() => setFilter(f)}>{f}</SegmentButton>
            ))}
          </Segment>
          <Pill>
            {["最新评论", "最新发帖"].map((o) => (
              <PillButton key={o} $on={o === order} onClick={() => setOrder(o)}>{o}</PillButton>
            ))}
          </Pill>
        </FilterRow>
      </Posts>
      <FeedEdge><AvatarTip /></FeedEdge>

      <IndexRow>
        <IndexName>氧化铝加权</IndexName>
        <span>2792</span>
        <span>6.98%</span>
        <span>182</span>
        <IndexVolume>564.12亿</IndexVolume>
        <IconButton aria-label="展开指数"><Chevron w={36} h={22} stroke="#bbb" width={4} up /></IconButton>
      </IndexRow>

      <ActionBar>
        <TradeButton>交易下单</TradeButton>
        <Actions>
          <Action><BellIcon />提醒</Action>
          <Action><PostIcon />发帖</Action>
          <Action><GridIcon />更多</Action>
          <Action><FavoriteIcon />设自选</Action>
        </Actions>
      </ActionBar>

      <SystemNav>
        <IconButton aria-label="最近任务">
          <svg width="36" height="38" stroke="#999" strokeWidth="3" aria-hidden="true"><path d="M0 2H36M0 19H36M0 36H36" /></svg>
        </IconButton>
        <IconButton aria-label="主屏幕">
          <svg width="38" height="38" fill="none" stroke="#999" strokeWidth="3" aria-hidden="true"><rect x="2" y="2" width="34" height="34" rx="8" /></svg>
        </IconButton>
        <IconButton aria-label="后退">
          <svg width="38" height="38" fill="none" stroke="#999" strokeWidth="3" strokeLinejoin="round" aria-hidden="true"><path d="M35 3V35L3 21Q1 19 3 17Z" /></svg>
        </IconButton>
      </SystemNav>
    </Page>
  );
}
